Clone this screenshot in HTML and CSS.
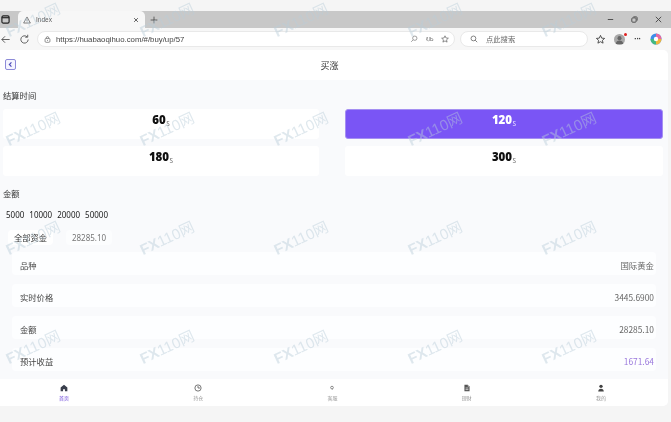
FILE: index.html
```html
<!DOCTYPE html>
<html lang="zh">
<head>
<meta charset="utf-8">
<title>Index</title>
<link rel="stylesheet" href="styles.css">
</head>
<body>
<div class="screen">
  <div class="topgap"></div>
  <div class="tabstrip">
    <svg class="winbtn" viewBox="0 0 10 10"><rect x="1" y="1" width="8" height="8" rx="1.5" fill="none" stroke="#222" stroke-width="1.3"/><path d="M1 3h8" stroke="#222" stroke-width="1.3"/></svg>
    <div class="tab">
      <svg class="warn" viewBox="0 0 10 10"><path d="M5 1.2 9.2 8.8H.8z" fill="none" stroke="#555" stroke-width=".9"/><path d="M5 4v2.4M5 7.2v.6" stroke="#555" stroke-width=".8"/></svg>
      <span class="tabtitle">Index</span>
      <svg class="tabx" viewBox="0 0 8 8"><path d="M1.5 1.5l5 5M6.5 1.5l-5 5" stroke="#333" stroke-width="1"/></svg>
    </div>
    <svg class="plus" viewBox="0 0 10 10"><path d="M5 .8v8.4M.8 5h8.4" stroke="#444" stroke-width="1"/></svg>
    <div class="winctl">
      <svg viewBox="0 0 10 10"><path d="M2 5h6" stroke="#444" stroke-width="1"/></svg>
      <svg viewBox="0 0 10 10"><rect x="2" y="3.2" width="4.8" height="4.8" rx="1" fill="none" stroke="#444"/><path d="M3.8 2h3a1.2 1.2 0 0 1 1.2 1.2v3" fill="none" stroke="#444" stroke-width=".9"/></svg>
      <svg viewBox="0 0 10 10"><path d="M2 2l6 6M8 2l-6 6" stroke="#444" stroke-width="1"/></svg>
    </div>
  </div>
  <div class="toolbar">
    <svg class="tool" viewBox="0 0 12 12"><path d="M10.5 6H2M5.5 2.500 2 6l3.500 3.500" fill="none" stroke="#555" stroke-width="1"/></svg>
    <svg class="tool reload" viewBox="0 0 12 12"><path d="M10 6a4 4 0 1 1-1.300-3M9.500 .8v2.700H6.800" fill="none" stroke="#555" stroke-width="1"/></svg>
    <div class="address">
      <svg class="lock" viewBox="0 0 10 10"><rect x="1.500" y="3.500" width="7" height="5.500" rx="1.500" fill="none" stroke="#555" stroke-width=".9"/><path d="M3.300 3.500V2.600a1.700 1.700 0 0 1 3.400 0v.9M5 5.500v1.500" fill="none" stroke="#555" stroke-width=".9"/></svg>
      <span class="url">https://huabaoqihuo.com/#/buy/up/57</span>
      <svg class="addr-ico" viewBox="0 0 10 10"><circle cx="6" cy="4" r="2.700" fill="none" stroke="#888"/><path d="M4 6 1.500 8.500" stroke="#888"/></svg>
      <span class="reader">ᎧᏏ</span>
      <svg class="addr-ico" viewBox="0 0 10 10"><path d="M5 1l1.200 2.700 3 .3-2.300 2 .7 2.900L5 7.400 2.400 8.900l.7-2.900L.8 4l3-.3z" fill="none" stroke="#555" stroke-width=".8"/></svg>
    </div>
    <div class="search">
      <svg class="searchico" viewBox="0 0 10 10"><circle cx="4.300" cy="4.300" r="3" fill="none" stroke="#666"/><path d="M6.500 6.500 9 9" stroke="#666"/></svg>
      <span class="searchtext">点此搜索</span>
    </div>
    <svg class="tool fav" viewBox="0 0 12 12"><path d="M6 1.500l1.300 3 3.200.3-2.400 2.100.7 3.100L6 8.400 3.200 10l.7-3.100L1.500 4.800l3.200-.3z" fill="none" stroke="#444"/></svg>
    <div class="avatar"><svg viewBox="0 0 12 12"><circle cx="6" cy="4.500" r="2.200" fill="#666"/><path d="M2 11c0-3 2-4 4-4s4 1 4 4z" fill="#666"/></svg><i class="dot"></i></div>
    <span class="more">···</span>
    <svg class="copilot" viewBox="0 0 12 12"><circle cx="6" cy="6" r="5.500" fill="#3f8ee8"/><path d="M6 .5A5.500 5.500 0 0 1 11.500 6H6z" fill="#e86aa0"/><path d="M11.500 6A5.500 5.500 0 0 1 6 11.500V6z" fill="#f2b63c"/><path d="M6 11.500A5.500 5.500 0 0 1 .5 6H6z" fill="#43b97f"/><circle cx="6" cy="6" r="2.200" fill="#fff"/></svg>
  </div>

  <div class="page">
    <header class="head">
      <button class="back"><svg viewBox="0 0 6 6"><path d="M3.800 1.200 2 3l1.800 1.800" fill="none" stroke="#4a48b8" stroke-width="1"/></svg></button>
      <h1 class="title">买涨</h1>
    </header>
    <main class="content">
      <p class="label label-time">结算时间</p>
      <div class="times">
        <div class="time"><b>60</b><small>s</small></div>
        <div class="time active"><b>120</b><small>s</small></div>
        <div class="time"><b>180</b><small>s</small></div>
        <div class="time"><b>300</b><small>s</small></div>
      </div>
      <p class="label label-amount">金额</p>
      <div class="amounts"><span>5000</span><span>10000</span><span>20000</span><span>50000</span></div>
      <div class="funds"><span class="fund-btn">全部资金</span><span class="fund-val">28285.10</span></div>
      <ul class="rows">
        <li class="row"><span>品种</span><span class="val">国际黄金</span></li>
        <li class="row"><span>实时价格</span><span class="val">3445.6900</span></li>
        <li class="row"><span>金额</span><span class="val">28285.10</span></li>
        <li class="row"><span>预计收益</span><span class="val profit">1671.64</span></li>
      </ul>
    </main>
    <nav class="nav">
      <a class="navitem on"><svg viewBox="0 0 10 10"><path d="M5 .8 9.200 4.500V9.200H6.200V6.500H3.800V9.200H.8V4.500z" fill="#3a3f4d"/></svg><span>首页</span></a>
      <a class="navitem"><svg viewBox="0 0 10 10"><circle cx="5" cy="5" r="3.900" fill="none" stroke="#555" stroke-width="1"/><path d="M5 2.500V5h2.500" fill="none" stroke="#555" stroke-width="1"/></svg><span>持仓</span></a>
      <a class="navitem"><svg viewBox="0 0 10 10"><circle cx="5" cy="4.500" r="1.700" fill="none" stroke="#666" stroke-width=".9"/><path d="M5 6.500h1" stroke="#666" stroke-width=".7"/></svg><span>客服</span></a>
      <a class="navitem"><svg viewBox="0 0 10 10"><path d="M1.800 .8H6L8.200 3v6.200H1.800z" fill="#555"/><path d="M3.200 5h3.600M3.200 7h3.600" stroke="#fff" stroke-width=".8"/><path d="M6 .8V3h2.200" fill="#ddd"/></svg><span>理财</span></a>
      <a class="navitem"><svg viewBox="0 0 10 10"><circle cx="5" cy="2.900" r="2.100" fill="#444"/><path d="M1.500 9.500c0-2.500 1.500-3.700 3.500-3.700s3.500 1.200 3.500 3.700z" fill="#444"/></svg><span>我的</span></a>
    </nav>
  </div>

  <div class="marks" aria-hidden="true">
    <span class="mark"><b>FX</b>110网</span><span class="mark"><b>FX</b>110网</span><span class="mark"><b>FX</b>110网</span><span class="mark"><b>FX</b>110网</span><span class="mark"><b>FX</b>110网</span>
    <span class="mark"><b>FX</b>110网</span><span class="mark"><b>FX</b>110网</span><span class="mark"><b>FX</b>110网</span><span class="mark"><b>FX</b>110网</span><span class="mark"><b>FX</b>110网</span>
    <span class="mark"><b>FX</b>110网</span><span class="mark"><b>FX</b>110网</span><span class="mark"><b>FX</b>110网</span><span class="mark"><b>FX</b>110网</span><span class="mark"><b>FX</b>110网</span>
    <span class="mark"><b>FX</b>110网</span><span class="mark"><b>FX</b>110网</span><span class="mark"><b>FX</b>110网</span><span class="mark"><b>FX</b>110网</span><span class="mark"><b>FX</b>110网</span>
  </div>
</div>
</body>
</html>
```

FILE: styles.css
```css
* { box-sizing: border-box; margin: 0; padding: 0; }
html, body { width: 671px; height: 422px; overflow: hidden; background: #f5f5f5; }
body { font-family: "Noto Sans CJK SC", "Noto Sans", sans-serif; color: #333; }
.screen { position: relative; width: 671px; height: 422px; display: flex; flex-direction: column; background: #f5f5f5; overflow: hidden; filter: blur(.45px); }

.topgap { height: 11px; flex: none; }
.tabstrip { height: 17px; flex: none; background: #c8c8c8; display: flex; align-items: center; }
.winbtn { width: 9px; height: 9px; margin-left: 1px; flex: none; }
.tab { width: 127px; height: 17px; margin-left: 8px; background: #f7f7f7; border-radius: 5px 5px 0 0; display: flex; align-items: center; padding: 0 5px; flex: none; }
.warn { width: 8px; height: 8px; }
.tabtitle { font: 6.500px "Liberation Sans", sans-serif; margin-left: 5px; color: #555; flex: 1; }
.tabx { width: 6px; height: 6px; margin-right: 1px; }
.plus { width: 8px; height: 8px; margin-left: 5px; flex: none; }
.winctl { margin-left: auto; display: flex; gap: 15px; padding-right: 8px; }
.winctl svg { width: 9px; height: 9px; }

.toolbar { height: 22px; flex: none; background: #f7f7f7; display: flex; align-items: center; }
.tool { width: 11px; height: 11px; flex: none; }
.reload { margin-left: 8px; }
.address { width: 418px; height: 16px; margin-left: 7px; flex: none; background: #fff; border: 1px solid #e9e9e9; border-radius: 8px; display: flex; align-items: center; padding: 0 5px 0 6px; }
.lock { width: 7px; height: 7px; flex: none; }
.url { font: 7.800px "Liberation Sans", sans-serif; color: #444; margin-left: 5px; flex: 1; white-space: nowrap; }
.addr-ico { width: 8px; height: 8px; flex: none; }
.reader { font: 5.500px "DejaVu Sans", sans-serif; color: #777; margin: 0 7px 0 8px; }
.search { width: 128px; height: 16px; margin-left: 5px; flex: none; background: #fff; border: 1px solid #e9e9e9; border-radius: 8px; display: flex; align-items: center; padding-left: 9px; }
.searchico { width: 8px; height: 8px; }
.searchtext { font-size: 7.300px; color: #666; margin-left: 8px; }
.fav { margin-left: 7px; }
.avatar { position: relative; width: 11px; height: 11px; margin-left: 8px; border-radius: 50%; background: #a8a8a8; flex: none; }
.avatar svg { display: block; width: 11px; height: 11px; }
.dot { position: absolute; right: -2px; top: -1px; width: 3px; height: 3px; border-radius: 50%; background: #e02020; }
.more { font: bold 7px "DejaVu Sans", sans-serif; margin-left: 9px; color: #444; letter-spacing: -.5px; }
.copilot { width: 12px; height: 12px; margin-left: 10px; flex: none; }

.page { flex: none; width: 668px; height: 356px; display: flex; flex-direction: column; background: #f9fafc; border-radius: 0 5px 5px 0; overflow: hidden; }
.head { position: relative; height: 30px; flex: none; background: #fff; display: flex; align-items: center; justify-content: center; padding-right: 9px; }
.back { position: absolute; left: 5px; top: 9px; width: 11px; height: 11px; border: 1px solid #8d8bd8; border-radius: 2px; background: #f4f4ff; display: flex; align-items: center; justify-content: center; }
.back svg { width: 7px; height: 7px; }
.title { font-size: 9px; font-weight: 400; color: #333; }

.content { flex: 1; display: flex; flex-direction: column; min-height: 0; }
.label { font-size: 8.300px; color: #333; line-height: 12px; padding-left: 3px; }
.label-time { margin-top: 9px; }
.times { display: grid; grid-template-columns: 316px 318px; column-gap: 26px; row-gap: 7px; padding-left: 3px; margin-top: 8px; }
.time { height: 30px; background: #fff; border-radius: 3px; display: flex; align-items: center; justify-content: center; padding-bottom: 8px; color: #111; }
.time b { font-family: "Noto Sans", sans-serif; font-size: 11.500px; font-weight: 900; line-height: 14px; }
.time small { font-size: 7.500px; line-height: 8px; color: #777; margin-top: 5px; margin-left: .5px; }
.active { background: #7a55f5; color: #fff; border: 1px solid #a58ff2; }
.active small { color: #e5ddff; }
.label-amount { margin-top: 11px; }
.amounts { display: flex; gap: 5px; padding-left: 6px; margin-top: 10px; font: 8px/12px "Noto Sans", sans-serif; color: #222; }
.funds { display: flex; align-items: center; margin-top: 9px; padding-left: 8px; }
.fund-btn { width: 45px; height: 15px; line-height: 15px; background: #fff; border-radius: 4px; text-align: center; font-size: 8.300px; color: #333; }
.fund-val { width: 46px; height: 15px; margin-left: 13px; background: #fcfdfe; border-radius: 4px; text-align: center; font: 8px/15px "Noto Sans", sans-serif; color: #777; }
.rows { list-style: none; display: flex; flex-direction: column; gap: 9px; padding-left: 12px; margin-top: 7px; width: 656px; }
.row { height: 23px; background: #fdfeff; border-radius: 4px; display: flex; justify-content: space-between; align-items: center; padding: 2px 2px 0 8px; font-size: 8.300px; color: #444; }
.val { color: #666; font-size: 8.400px; }
.profit { color: #9a78dc; }

.nav { height: 27px; width: 671px; margin-left: -3px; flex: none; background: #fff; display: grid; grid-template-columns: repeat(5, 1fr); }
.navitem { display: flex; flex-direction: column; align-items: center; padding-top: 5px; font-size: 5px; color: #999; line-height: 8px; }
.navitem svg { width: 8px; height: 8px; margin-bottom: 2px; }
.on { color: #6b46d8; }

.marks { position: absolute; left: 0; top: 0; width: 671px; height: 422px; display: grid; grid-template-columns: repeat(5, 134px); grid-auto-rows: 109px; pointer-events: none; }
.mark { font: 400 15px "Liberation Sans", "Noto Sans CJK SC", sans-serif; color: #b9cdd9; opacity: .45; transform: rotate(-25deg); white-space: nowrap; margin: 11px 0 0 4px; align-self: start; width: 60px; height: 18px; line-height: 18px; }
.mark b { font-weight: 900; }
```
